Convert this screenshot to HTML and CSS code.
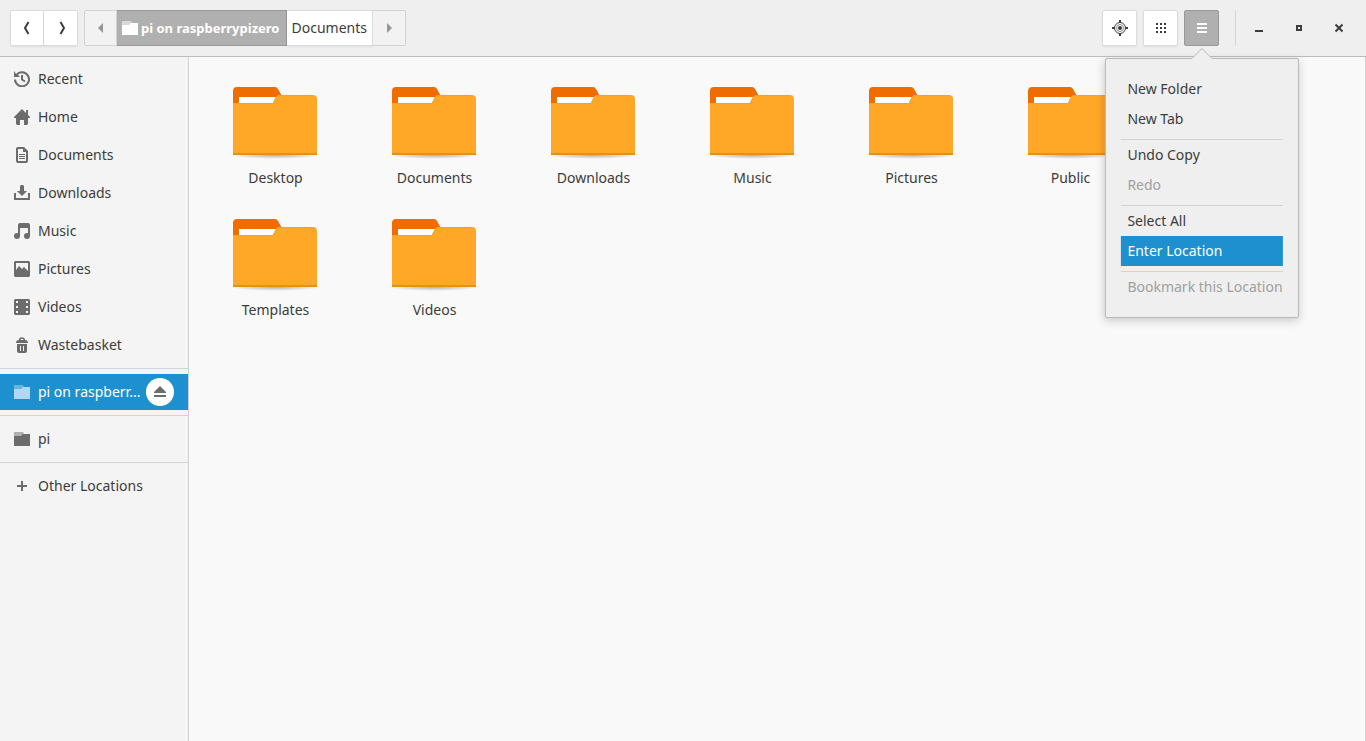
FILE: index.html
```html
<!DOCTYPE html>
<html lang="en">
<head>
<meta charset="utf-8">
<title>Files</title>
<link rel="stylesheet" href="styles.css">
</head>
<body>
<svg class="defs" aria-hidden="true">
  <defs>
    <radialGradient id="shade"><stop offset="0" stop-color="#000" stop-opacity=".3"/><stop offset="1" stop-color="#000" stop-opacity="0"/></radialGradient>
    <symbol id="folder" viewBox="1 0 96 96">
      <ellipse cx="48" cy="82" rx="46" ry="4" fill="url(#shade)"/>
      <path fill="#ef6c00" d="M6 40V18q0-4 4-4h38q2 0 3 2l5 9v15z"/>
      <path fill="#fff" d="M12 24h42v10H12z"/>
      <path fill="#ffa726" d="M6 30h40l3-6q1-2 4-2h33q4 0 4 4v56H6z"/>
      <path fill="#e0921c" d="M6 80h84v2H6z"/>
      <path fill="none" stroke="#f9a122" d="M6 30.500h40l3-6q1-2 4-2h33"/>
    </symbol>
    <symbol id="small-folder" viewBox="0 0 16 16">
      <path opacity=".5" d="M0 1h9l1 2v2H0z"/>
      <path d="M0 5h7l2-2h7v12H0z"/>
    </symbol>
  </defs>
</svg>
<div class="window">
  <header class="header">
    <div class="linked">
      <button class="btn nav" aria-label="Back"><svg class="icon" viewBox="0 0 16 16"><path class="stroke" d="M9.500 2L6 8l3.500 6"/></svg></button>
      <button class="btn nav" aria-label="Forward"><svg class="icon" viewBox="0 0 16 16"><path class="stroke" d="M7.500 2L11 8l-3.500 6"/></svg></button>
    </div>
    <nav class="pathbar" aria-label="Location">
      <button class="btn step" aria-label="Scroll left" disabled><svg class="icon" viewBox="0 0 16 16"><path d="M10 3v10L5 8z"/></svg></button>
      <button class="btn crumb active"><svg class="icon" viewBox="0 0 16 16"><use href="#small-folder"/></svg>pi on raspberrypizero</button>
      <button class="btn crumb">Documents</button>
      <button class="btn step" aria-label="Scroll right" disabled><svg class="icon" viewBox="0 0 16 16"><path d="M6 3v10l5-5z"/></svg></button>
    </nav>
    <div class="tools">
      <button class="btn tool" aria-label="Locate"><svg class="icon" viewBox="0 0 16 16"><circle cx="8" cy="8" r="5.500" fill="none" stroke="currentColor"/><circle cx="8" cy="8" r="3.500" fill="none" stroke="currentColor" opacity=".6"/><circle cx="8" cy="8" r="2"/><path d="M7 0h2v3H7zM7 13h2v3H7zM0 7h3v2H0zM13 7h3v2h-3z"/></svg></button>
      <button class="btn tool" aria-label="Icon view"><svg class="icon" viewBox="0 0 16 16"><path d="M3 3h2v2H3zM7 3h2v2H7zM11 3h2v2h-2zM3 7h2v2H3zM7 7h2v2H7zM11 7h2v2h-2zM3 11h2v2H3zM7 11h2v2H7zM11 11h2v2h-2z"/></svg></button>
      <div class="menu-anchor">
        <button class="btn tool active" aria-label="Menu" aria-expanded="true"><svg class="icon" viewBox="0 0 16 16"><path d="M3 3h10v2H3zM3 7h10v2H3zM3 11h10v2H3z"/></svg></button>
        <div class="popover" role="menu">
          <svg class="arrow" viewBox="0 0 22 12"><path d="M0 11L1 10 11 0 21 10 22 11V12H0z" fill="#efefef"/><path d="M0 10.500h1L11 .5l10 10h1" fill="none" stroke="#b8b8b8"/></svg>
          <button class="item" role="menuitem">New Folder</button>
          <button class="item" role="menuitem">New Tab</button>
          <hr class="rule">
          <button class="item" role="menuitem">Undo Copy</button>
          <button class="item" role="menuitem" disabled>Redo</button>
          <hr class="rule">
          <button class="item" role="menuitem">Select All</button>
          <button class="item selected" role="menuitem">Enter Location</button>
          <hr class="rule">
          <button class="item" role="menuitem" disabled>Bookmark this Location</button>
        </div>
      </div>
    </div>
    <div class="controls">
      <button class="control" aria-label="Minimise"><svg class="icon" viewBox="0 0 16 16"><path d="M4 10h8v2H4z"/></svg></button>
      <button class="control" aria-label="Maximise"><svg class="icon" viewBox="0 0 16 16"><path fill-rule="evenodd" d="M5 5h6v6H5zM7 7v2h2V7z"/></svg></button>
      <button class="control" aria-label="Close"><svg class="icon" viewBox="0 0 16 16"><path class="stroke" d="M4.500 4.500l7 7M11.500 4.500l-7 7"/></svg></button>
    </div>
  </header>
  <div class="body">
    <nav class="sidebar" aria-label="Places">
      <a class="place" href="#"><svg class="icon" viewBox="0 0 16 16"><path class="stroke" d="M2.500 4A7 7 0 1 1 1 8.500M8 4v4.500l3 2"/><path d="M0 0v6h6L4 4 2 3z"/></svg><span class="name">Recent</span></a>
      <a class="place" href="#"><svg class="icon" viewBox="0 0 16 16"><path d="M8 0l4 4V1h2v5l2 2v1h-2v6l-1 1h-3v-5H6v5H3l-1-1V9H0V8z"/></svg><span class="name">Home</span></a>
      <a class="place" href="#"><svg class="icon" viewBox="0 0 16 16"><path fill-rule="evenodd" d="M4 0h6l4 4v10q0 2-2 2H4q-2 0-2-2V2q0-2 2-2zm0 2v12h8V5H9V2z"/><path d="M5 7h6v1H5zM5 9h6v1H5zM5 11h6v1H5z"/></svg><span class="name">Documents</span></a>
      <a class="place" href="#"><svg class="icon" viewBox="0 0 16 16"><path d="M6 1l1-1h2l1 1v5h3l-5 5-5-5h3zM0 8h2v5h12V8h2v7H0z"/></svg><span class="name">Downloads</span></a>
      <a class="place" href="#"><svg class="icon" viewBox="0 0 16 16"><path d="M4 2q0-2 2-2h8q2 0 2 2v11h-2V5H6v8H4z"/><circle cx="3" cy="13" r="3"/><circle cx="13" cy="13" r="3"/></svg><span class="name">Music</span></a>
      <a class="place" href="#"><svg class="icon" viewBox="0 0 16 16"><path fill-rule="evenodd" d="M1 0h14l1 1v14l-1 1H1l-1-1V1zM2 2v7l3-4 3 3 2-2 4 4V2z"/></svg><span class="name">Pictures</span></a>
      <a class="place" href="#"><svg class="icon" viewBox="0 0 16 16"><path fill-rule="evenodd" d="M1 0h14l1 1v14l-1 1H1l-1-1V1zM2 2v2h2V2zM2 7v2h2V7zM2 12v2h2v-2zM12 2v2h2V2zM12 7v2h2V7zM12 12v2h2v-2z"/></svg><span class="name">Videos</span></a>
      <a class="place" href="#"><svg class="icon" viewBox="0 0 16 16"><path fill-rule="evenodd" d="M3 7h10v7q0 2-2 2H5q-2 0-2-2zM6 9v5h1V9zM9 9v5h1V9z"/><path d="M2 6q0-3 3-3h6q3 0 3 3z"/><path d="M5.500 3.500a2.500 2.500 0 0 1 5 0" fill="none" stroke="currentColor" stroke-width="1.500"/></svg><span class="name">Wastebasket</span></a>
      <hr class="divider">
      <div class="place current"><svg class="icon" viewBox="0 0 16 16"><use href="#small-folder"/></svg><a class="name" href="#" title="pi on raspberrypizero">pi on raspberr...</a><button class="eject" aria-label="Eject"><svg class="icon" viewBox="0 0 16 16"><path d="M8 2l6 6v1H2V8zM2 11h12v2H2z"/></svg></button></div>
      <hr class="divider">
      <a class="place" href="#"><svg class="icon" viewBox="0 0 16 16"><use href="#small-folder"/></svg><span class="name">pi</span></a>
      <hr class="divider">
      <a class="place" href="#"><svg class="icon" viewBox="0 0 16 16"><path d="M7 3h2v4h4v2H9v4H7V9H3V7h4z"/></svg><span class="name">Other Locations</span></a>
    </nav>
    <main class="files">
      <a class="file" href="#"><svg class="folder"><use href="#folder"/></svg>Desktop</a>
      <a class="file" href="#"><svg class="folder"><use href="#folder"/></svg>Documents</a>
      <a class="file" href="#"><svg class="folder"><use href="#folder"/></svg>Downloads</a>
      <a class="file" href="#"><svg class="folder"><use href="#folder"/></svg>Music</a>
      <a class="file" href="#"><svg class="folder"><use href="#folder"/></svg>Pictures</a>
      <a class="file" href="#"><svg class="folder"><use href="#folder"/></svg>Public</a>
      <a class="file" href="#"><svg class="folder"><use href="#folder"/></svg>Templates</a>
      <a class="file" href="#"><svg class="folder"><use href="#folder"/></svg>Videos</a>
    </main>
  </div>
</div>
</body>
</html>
```
FILE: styles.css
```css
* { box-sizing: border-box; }
body { margin: 0; font: 14px/20px "Noto Sans", sans-serif; color: #3c3c3c; background: #f9f9f9; }
button { margin: 0; padding: 0; border: 0; background: none; font: inherit; color: inherit; }
a { color: inherit; text-decoration: none; }
hr { width: 100%; margin: 0; border: 0; }
.defs { position: absolute; width: 0; height: 0; }
.icon { display: block; flex: none; width: 16px; height: 16px; fill: currentColor; }
.stroke { fill: none; stroke: currentColor; stroke-width: 2; }
.window { display: flex; flex-direction: column; min-height: 100vh; }

.header { display: flex; align-items: center; padding: 10px; background: #efefef; border-bottom: 1px solid #bdbdbd; }
.btn { display: flex; align-items: center; justify-content: center; height: 36px; background: #fff; border: 1px solid #dcdcdc; border-radius: 2px; box-shadow: 0 1px 2px rgba(0, 0, 0, .08); }
.btn:disabled { color: #969696; background: #f2f2f2; border-color: #d2d2d2; box-shadow: none; }
.btn.active { color: #fff; background: #b0b0b0; border-color: #989898; box-shadow: none; }
.linked, .pathbar { display: flex; }
.linked .btn + .btn, .pathbar .btn + .btn { border-left-width: 0; }
.linked .btn:first-child, .pathbar .btn:not(:last-child) { border-top-right-radius: 0; border-bottom-right-radius: 0; }
.linked .btn:last-child, .pathbar .btn:not(:first-child) { border-top-left-radius: 0; border-bottom-left-radius: 0; }
.nav { width: 34px; }
.pathbar { margin-left: 6px; }
.step { width: 33px; }
.crumb { padding: 0 5px; }
.crumb.active { gap: 3px; padding: 0 6px 0 5px; font-size: 13px; font-weight: 700; }
.tools { display: flex; gap: 6px; margin-left: auto; padding-right: 16px; }
.tool { width: 35px; }
.menu-anchor { position: relative; }
.controls { display: flex; gap: 6px; padding-left: 6px; border-left: 1px solid #d4d4d4; }
.control { display: flex; align-items: center; justify-content: center; width: 34px; height: 36px; }

.popover { position: absolute; z-index: 1; top: 48px; left: 50%; transform: translateX(-50%); padding: 15px; background: #efefef; border: 1px solid #b8b8b8; border-radius: 2px; box-shadow: 0 3px 10px rgba(0, 0, 0, .18); }
.arrow { position: absolute; top: -11px; left: 50%; width: 22px; height: 12px; margin-left: -11px; }
.item { display: block; width: 100%; height: 30px; padding: 0 0 0 7px; text-align: left; white-space: nowrap; }
.item:disabled { color: #a0a0a0; }
.item.selected { color: #fff; background: #1e90d0; }
.rule { height: 1px; margin-top: 5px; background: #d2d2d2; }

.body { display: flex; flex: 1; }
.sidebar { display: flex; flex: none; flex-direction: column; width: 189px; padding: 3px 0; background: #f4f4f4; border-right: 1px solid #d0d0d0; }
.place { display: flex; align-items: center; gap: 8px; height: 36px; margin: 1px 0; padding: 0 14px; }
.place > .icon { color: #6c6c6c; }
.name { flex: 1; min-width: 0; white-space: nowrap; }
.divider { height: 1px; margin: 4px 0; background: #d4d4d4; }
.current { color: #fff; background: #1e90d0; }
.place.current > .icon { color: #b0d8f0; }
.eject { display: flex; align-items: center; justify-content: center; width: 28px; height: 28px; color: #6c6c6c; background: #fff; border-radius: 50%; }

.files { display: grid; flex: 1; grid-template-columns: repeat(auto-fill, 159px); grid-auto-rows: 132px; align-content: start; padding: 16px 64px 16px 7px; border-right: 1px solid #d0d0d0; }
.file { display: flex; flex-direction: column; align-items: center; line-height: 18px; }
.folder { width: 96px; height: 96px; }
```
